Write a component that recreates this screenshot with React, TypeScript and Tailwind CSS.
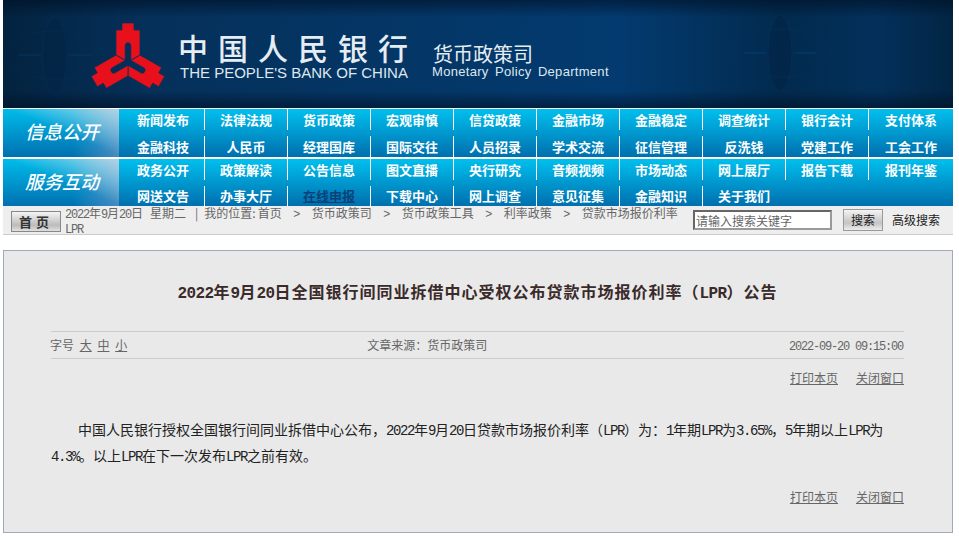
import React from 'react';

const cjk = "font-['Noto_Sans_CJK_SC',sans-serif]";

const serviceBands = [
  {
    label: '信息公开',
    rows: [
      ['新闻发布', '法律法规', '货币政策', '宏观审慎', '信贷政策', '金融市场', '金融稳定', '调查统计', '银行会计', '支付体系'],
      ['金融科技', '人民币', '经理国库', '国际交往', '人员招录', '学术交流', '征信管理', '反洗钱', '党建工作', '工会工作'],
    ],
  },
  {
    label: '服务互动',
    rows: [
      ['政务公开', '政策解读', '公告信息', '图文直播', '央行研究', '音频视频', '市场动态', '网上展厅', '报告下载', '报刊年鉴'],
      ['网送文告', '办事大厅', '在线申报', '下载中心', '网上调查', '意见征集', '金融知识', '关于我们'],
    ],
  },
];

// half-width latin, the way the original's old CJK font sets digits
function L({ children }: { children: React.ReactNode }) {
  return <span className="font-['Liberation_Mono',monospace] tracking-[-0.1em] leading-none">{children}</span>;
}

// same thing for the title, which has 1px of letter spacing on top
function TitleLatin({ children }: { children: React.ReactNode }) {
  return <span className="font-['Liberation_Mono',monospace] tracking-[-0.6px] leading-none">{children}</span>;
}

function Logo() {
  const arm = 'M42 8H54V15H60V40L50.8 45.4V30.5A2.8 2.8 0 0 0 45.2 30.5V45.4L36 40V15H42Z';
  return (
    <svg viewBox="0 0 100 80" className="w-[100px] h-[80px] shrink-0">
      <g fill="#e8101a" stroke="#06305a" strokeWidth="0.7">
        <path d={arm} />
        <path d={arm} transform="rotate(120 48 47)" />
        <path d={arm} transform="rotate(240 48 47)" />
      </g>
    </svg>
  );
}

// the faint old coin printed into the banner background
function CoinMark({ className }: { className: string }) {
  return (
    <svg viewBox="0 0 120 90" className={`absolute ${className}`} fill="none">
      <ellipse cx="60" cy="45" rx="12" ry="38" fill="#021f3c" fillOpacity="0.45" stroke="#04396b" strokeOpacity="0.6" />
      <ellipse cx="60" cy="45" rx="50" ry="24" stroke="#04396b" strokeOpacity="0.45" />
      <path d="M24 45H46M74 45H96" stroke="#04437c" strokeWidth="2" strokeOpacity="0.7" />
    </svg>
  );
}

function Header() {
  return (
    <header className="relative h-[108px] flex bg-[linear-gradient(to_bottom,rgba(0,15,35,0.6)_0%,rgba(0,15,35,0)_16%,rgba(0,15,35,0)_84%,rgba(0,15,35,0.6)_100%),linear-gradient(to_right,#03233f_0%,#05305a_15%,#033b70_65%,#022a4e_82%,#03305a_92%,#022543_100%)] pl-[77px] pt-[15px]">
      <CoinMark className="left-[-8px] top-[10px] w-[120px] h-[90px] opacity-40" />
      <CoinMark className="left-[717px] top-[8px] w-[120px] h-[90px] opacity-60" />
      <div className="relative flex">
        <Logo />
        <div className="w-[253px] -ml-[1px] pt-[14px]">
          <div className={`${cjk} -ml-[1px] text-[30px] leading-[36px] tracking-[10px] font-medium text-[#e6edf2] whitespace-nowrap`}>中国人民银行</div>
          <div className="font-['Liberation_Sans',sans-serif] text-[15px] leading-[15px] text-[#dfe7ee] pl-[1px] whitespace-nowrap">THE PEOPLE'S BANK OF CHINA</div>
        </div>
        <div className="pt-[27px] pl-[1px]">
          <div className={`${cjk} text-[20px] leading-[24px] text-[#e6edf2] whitespace-nowrap`}>货币政策司</div>
          <div className="font-['Liberation_Sans',sans-serif] text-[13px] leading-[12px] tracking-[0.3px] [word-spacing:2.5px] text-[#dfe7ee] -ml-[1px] whitespace-nowrap">Monetary Policy Department</div>
        </div>
      </div>
    </header>
  );
}

function NavBand({ label, rows, tall }: { label: string; rows: string[][]; tall: boolean }) {
  return (
    <div className={`flex bg-[linear-gradient(to_bottom,#00c0ee,#006fae)] ${tall ? 'h-[48px]' : 'h-[47px]'}`}>
      <div className={`${cjk} w-[116px] shrink-0 flex items-center justify-center pb-[2px] pl-[2px] text-[18.5px] font-medium italic text-white bg-[linear-gradient(to_top_right,rgba(190,215,230,0)_52%,rgba(190,215,230,0.9)_100%),linear-gradient(to_right,rgba(130,160,205,0)_60%,rgba(130,160,205,0.55)_100%),linear-gradient(to_bottom,#00bcea,#0070b0)]`}>
        {label}
      </div>
      <div className="grid grid-cols-[85px_repeat(8,83px)_85px] grid-rows-2 gap-y-[6px] w-[834px]">
        {rows.flatMap((row, r) =>
          row.map((name, i) => (
            <a
              key={name}
              className={`${cjk} flex items-center justify-center text-[13px] font-bold leading-none ${
                i > 0 ? 'border-l border-white' : 'pl-[3px]'
              } ${name === '在线申报' ? 'text-[#0a4278] underline' : 'text-white'}`}
              style={{ gridRow: r + 1 }}
            >
              {name}
            </a>
          )),
        )}
      </div>
    </div>
  );
}

function Crumbs() {
  const sep = <span className="mx-[11.5px] font-['Liberation_Sans',sans-serif]">&gt;</span>;
  return (
    <div className={`${cjk} h-[29px] flex items-start bg-[#eeeeee] border-b border-[#cccccc] text-[12px]`}>
      <button className="w-[50px] h-[21px] mt-[5px] ml-[8px] shrink-0 border border-[#888888] bg-[linear-gradient(to_bottom,#f4f4f4,#bcbcbc_70%,#e0e0e0)] text-[13px] font-bold leading-none text-[#333333] tracking-[4px]">
        首页
      </button>
      <div className="w-[620px] ml-[4px] leading-[14px] text-[#666666] whitespace-nowrap">
        <L>2022</L>年<L>9</L>月<L>20</L>日<span className="ml-[7px]">星期二</span>
        <span className="ml-[9px] mr-[6px]">|</span>我的位置:<span className="ml-[2px]">首页</span>{sep}货币政策司{sep}货币政策工具{sep}利率政策{sep}贷款市场报价利率
        <br />
        <L>LPR</L>
      </div>
      <input
        placeholder="请输入搜索关键字"
        className="w-[139px] h-[20px] mt-[4px] ml-[8px] shrink-0 bg-white border-2 border-t-[#666666] border-l-[#666666] border-b-[#999999] border-r-[#999999] px-px text-[12px] placeholder:text-[#666666] outline-none"
      />
      <button className="w-[40px] h-[22px] mt-[3px] ml-[11px] shrink-0 border border-[#999999] bg-[linear-gradient(to_bottom,#f4f4f4,#c4c4c4_65%,#ececec)] text-[12px] leading-none text-[#222222]">
        搜索
      </button>
      <a className="ml-[9px] mt-[6px] leading-[16px] text-[#222222] whitespace-nowrap">高级搜索</a>
    </div>
  );
}

function PrintLinks() {
  return (
    <div className="flex justify-end gap-[18px] text-[12px] leading-[16px] text-[#666666] underline">
      <a>打印本页</a>
      <a>关闭窗口</a>
    </div>
  );
}

function Article() {
  return (
    <main className={`${cjk} h-[283px] mt-[15px] bg-[#e9e9e9] border border-[#a0aab8] pl-[47px] pr-[48px]`}>
      <h1 className="pt-[30px] h-[80px] text-center text-[16px] leading-[20px] font-bold tracking-[1px] text-[#3a2a2a] whitespace-nowrap">
        <TitleLatin>2022</TitleLatin>年<TitleLatin>9</TitleLatin>月<TitleLatin>20</TitleLatin>日全国银行间同业拆借中心受权公布贷款市场报价利率（<TitleLatin>LPR</TitleLatin>）公告
      </h1>
      <div className="h-[28px] grid grid-cols-3 items-center border-y border-[#cccccc] text-[12px] text-[#666666]">
        <div className="-ml-px">
          字号 <span className="underline ml-[3px]">大</span> <span className="underline ml-[3px]">中</span>{' '}
          <span className="underline ml-[3px]">小</span>
        </div>
        <div className="pl-[32px]">文章来源：货币政策司</div>
        <div className="text-right pr-px">
          <L>2022-09-20 09:15:00</L>
        </div>
      </div>
      <div className="pt-[11px]">
        <PrintLinks />
      </div>
      <p className="pt-[30px] text-[14px] leading-[26px] indent-[27px] text-[#222222]">
        中国人民银行授权全国银行间同业拆借中心公布，<L>2022</L>年<L>9</L>月<L>20</L>日贷款市场报价利率（<L>LPR</L>）为：<L>1</L>年期<L>LPR</L>为<L>3.65%</L>，<L>5</L>年期以上<L>LPR</L>为 <L>4.3%</L>。以上<L>LPR</L>在下一次发布<L>LPR</L>之前有效。
      </p>
      <div className="pt-[21px]">
        <PrintLinks />
      </div>
    </main>
  );
}

export default function App() {
  return (
    <div className="w-[950px] ml-[3px] bg-white">
      <Header />
      <nav className="flex flex-col gap-[2px] pt-[1px]">
        {serviceBands.map((band, i) => (
          <NavBand key={band.label} label={band.label} rows={band.rows} tall={i === 0} />
        ))}
      </nav>
      <Crumbs />
      <Article />
    </div>
  );
}
